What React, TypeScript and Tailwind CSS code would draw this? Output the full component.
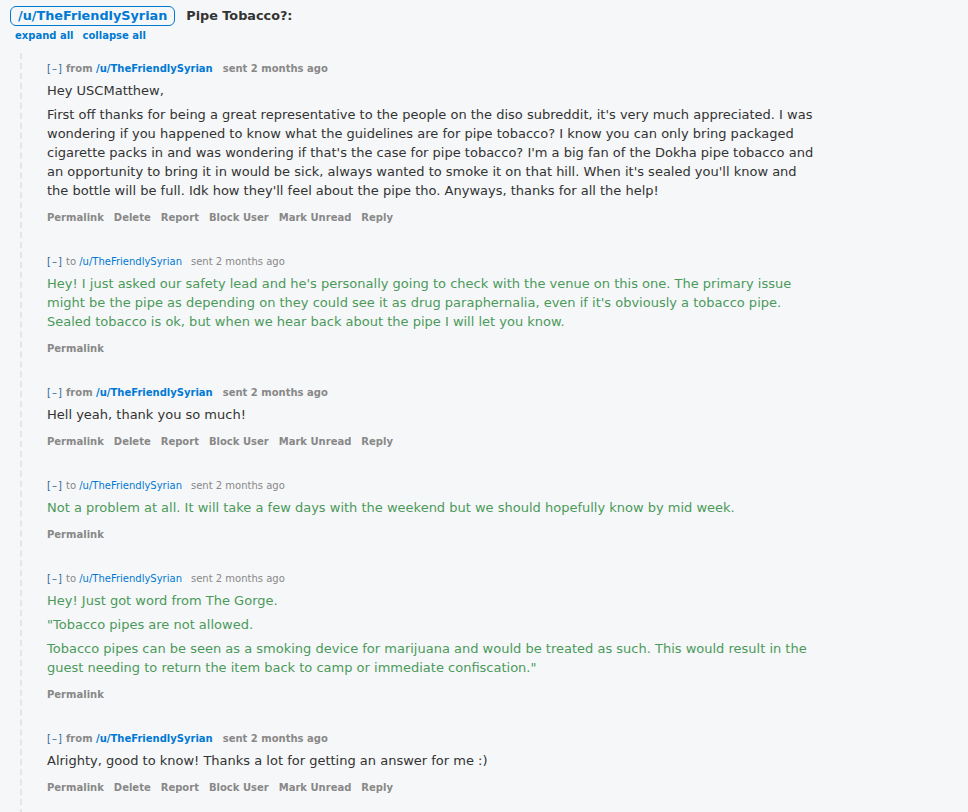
import React from 'react'

type Msg = {
  dir: 'from' | 'to'
  paras: string[]
}

const USER = '/u/TheFriendlySyrian'

const MESSAGES: Msg[] = [
  {
    dir: 'from',
    paras: [
      'Hey USCMatthew,',
      "First off thanks for being a great representative to the people on the diso subreddit, it's very much appreciated. I was wondering if you happened to know what the guidelines are for pipe tobacco? I know you can only bring packaged cigarette packs in and was wondering if that's the case for pipe tobacco? I'm a big fan of the Dokha pipe tobacco and an opportunity to bring it in would be sick, always wanted to smoke it on that hill. When it's sealed you'll know and the bottle will be full. Idk how they'll feel about the pipe tho. Anyways, thanks for all the help!",
    ],
  },
  {
    dir: 'to',
    paras: [
      "Hey! I just asked our safety lead and he's personally going to check with the venue on this one. The primary issue might be the pipe as depending on they could see it as drug paraphernalia, even if it's obviously a tobacco pipe. Sealed tobacco is ok, but when we hear back about the pipe I will let you know.",
    ],
  },
  { dir: 'from', paras: ['Hell yeah, thank you so much!'] },
  {
    dir: 'to',
    paras: ['Not a problem at all. It will take a few days with the weekend but we should hopefully know by mid week.'],
  },
  {
    dir: 'to',
    paras: [
      'Hey! Just got word from The Gorge.',
      '"Tobacco pipes are not allowed.',
      'Tobacco pipes can be seen as a smoking device for marijuana and would be treated as such. This would result in the guest needing to return the item back to camp or immediate confiscation."',
    ],
  },
  { dir: 'from', paras: ['Alrighty, good to know! Thanks a lot for getting an answer for me :)'] },
]

const FROM_BUTTONS = ['Permalink', 'Delete', 'Report', 'Block User', 'Mark Unread', 'Reply']

function Message({ msg }: { msg: Msg }) {
  const mine = msg.dir === 'to'
  return (
    <div className="pb-[30px]">
      <div className="h-[14px] text-[10px] leading-[14px] text-[#888] whitespace-nowrap">
        <span className="text-[#369] tracking-[1px]">[–]</span>{' '}
        {mine ? (
          <>
            to <span className="text-[#0079d3]">{USER}</span>
            <span className="ml-[9px]">sent 2 months ago</span>
          </>
        ) : (
          <span className="font-bold">
            from <span className="text-[#0079d3]">{USER}</span>
            <span className="ml-[10px]">sent 2 months ago</span>
          </span>
        )}
      </div>
      <div className={`mt-[5px] flex flex-col gap-[5px] text-[13px] leading-[19px] ${mine ? 'text-[#4b9a5b]' : 'text-[#333]'}`}>
        {msg.paras.map((p, i) => (
          <p key={i} className="max-w-[775px]">{p}</p>
        ))}
      </div>
      <div className="mt-[11px] flex gap-[10px] h-[14px] text-[10px] leading-[14px] font-bold text-[#888]">
        {(mine ? ['Permalink'] : FROM_BUTTONS).map((b) => (
          <span key={b}>{b}</span>
        ))}
      </div>
    </div>
  )
}

export default function App() {
  return (
    <div className="min-h-[812px] bg-[#f6f7f8] font-['DejaVu_Sans','Verdana',sans-serif]">
      <div className="pl-[10px] pt-[6px] flex items-center gap-[11px]">
        <span className="h-[20px] px-[7px] rounded-[6px] border border-[#0079d3] text-[12.8px] leading-[18px] font-bold text-[#0079d3]">
          {USER}
        </span>
        <span className="text-[12.8px] font-bold text-[#333]">Pipe Tobacco?:</span>
      </div>
      <div className="pl-[15px] mt-[3px] flex gap-[9px] text-[10px] leading-[14px] font-bold text-[#0079d3]">
        <span>expand all</span>
        <span>collapse all</span>
      </div>
      <div className="ml-[20px] mt-[10px] pt-[9px] pl-[25px] border-l-2 border-dashed border-[#e3e5e8]">
        {MESSAGES.map((m, i) => (
          <Message key={i} msg={m} />
        ))}
      </div>
    </div>
  )
}
